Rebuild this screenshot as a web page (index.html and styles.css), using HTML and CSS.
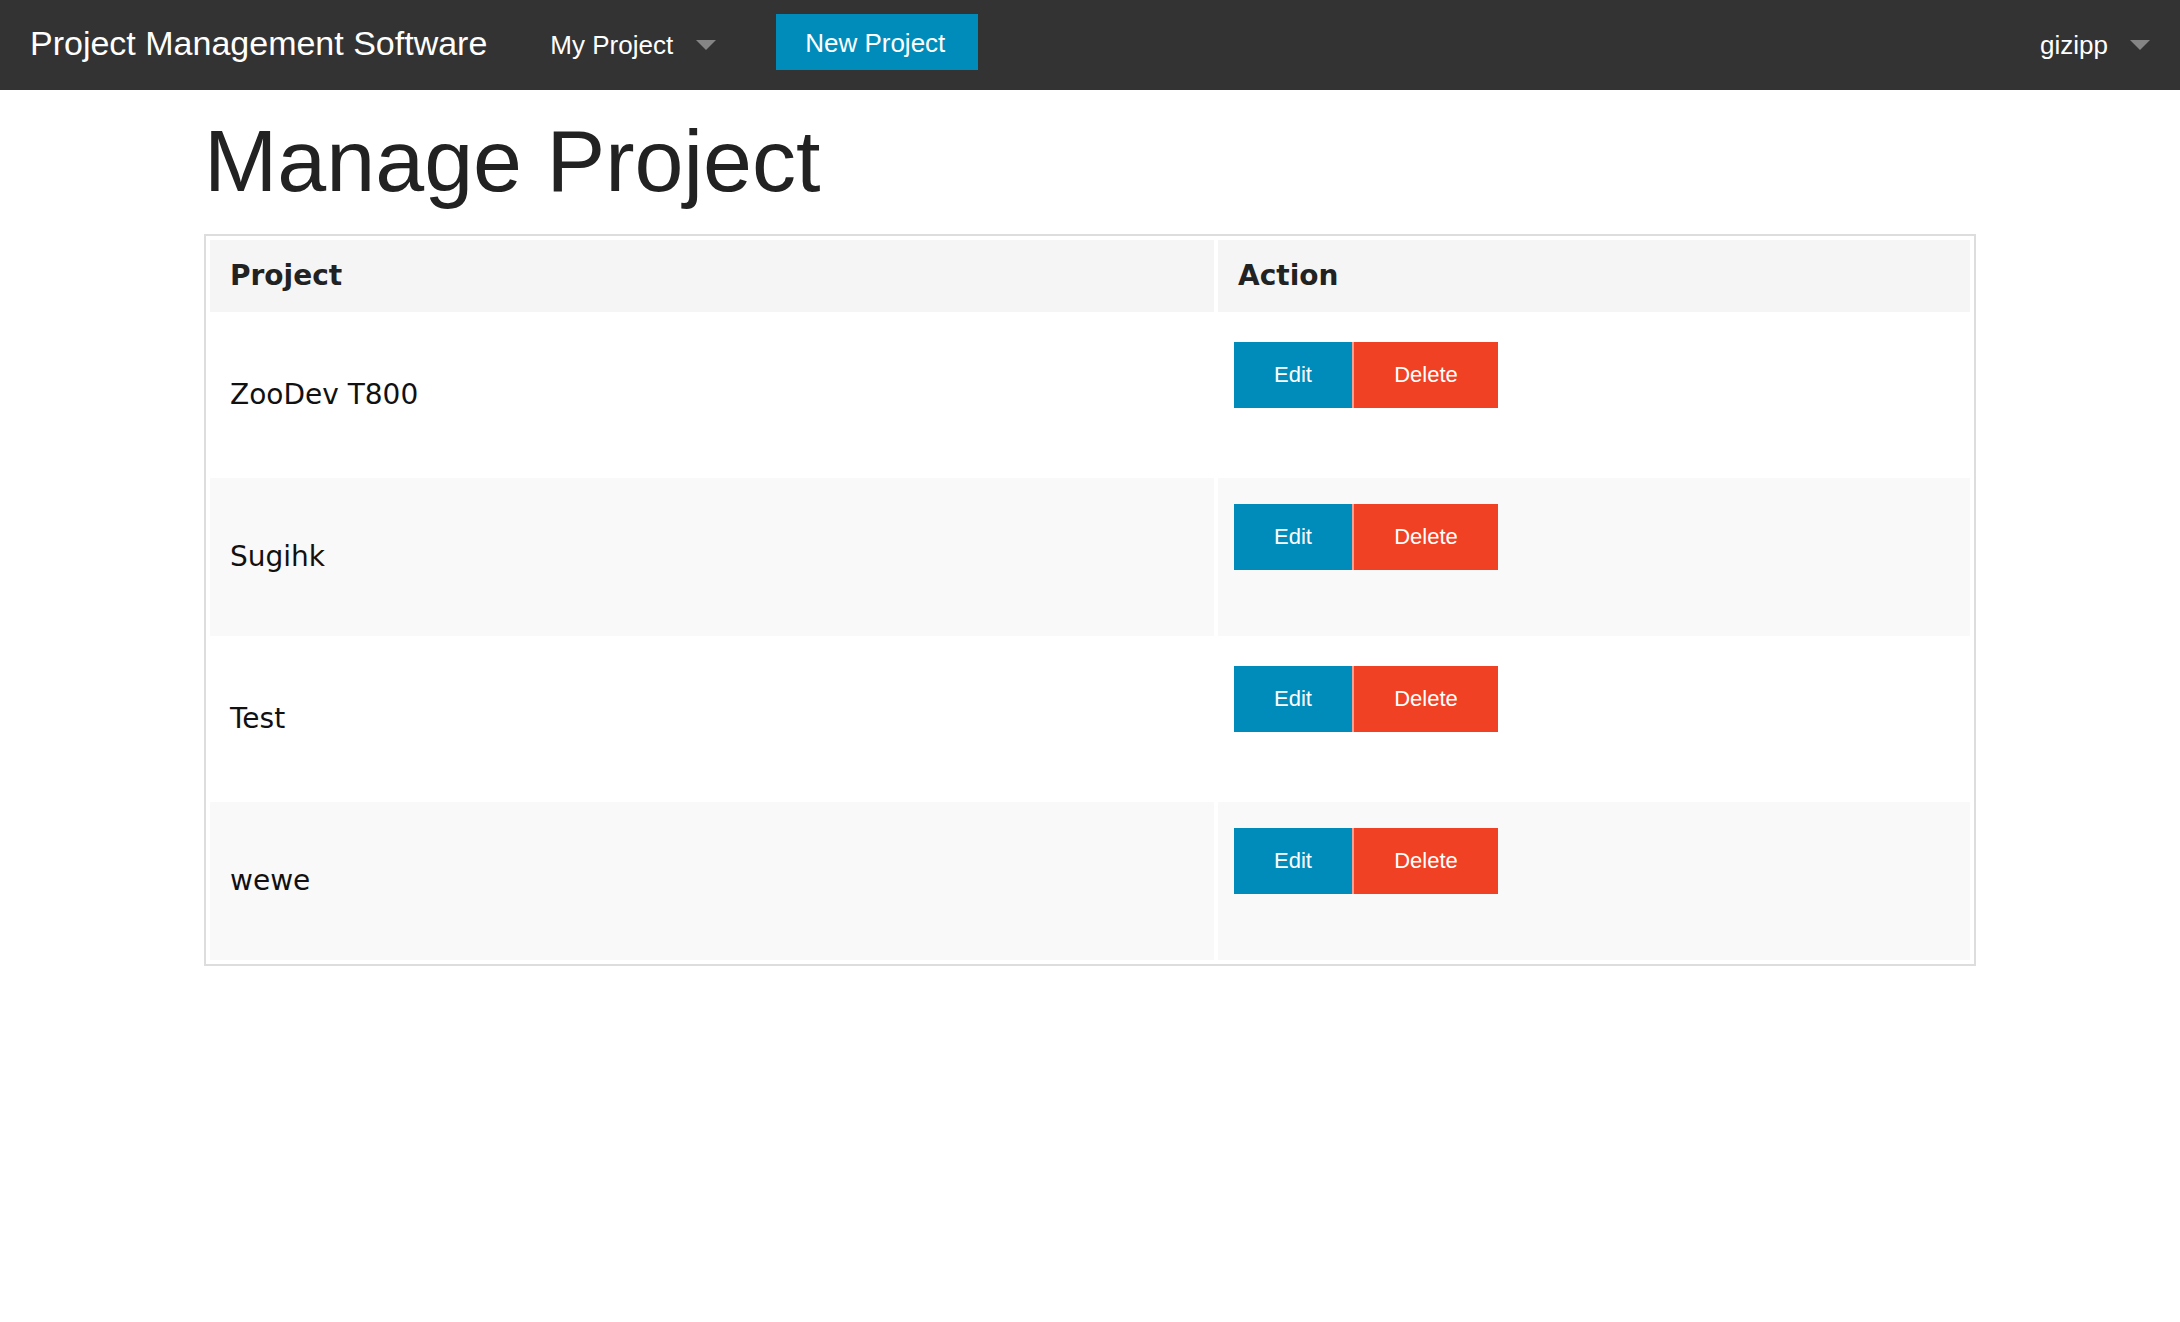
FILE: index.html
```html
<!DOCTYPE html>
<html lang="en">
<head>
<meta charset="utf-8">
<title>Manage Project</title>
<link rel="stylesheet" href="styles.css">
</head>
<body>
<nav class="topbar">
  <div class="brand">Project Management Software</div>
  <div class="nav-left">
    <a class="nav-link dropdown" href="#">My Project<span class="caret"></span></a>
    <a class="nav-button" href="#">New Project</a>
  </div>
  <div class="nav-right">
    <a class="nav-link dropdown user" href="#">gizipp<span class="caret"></span></a>
  </div>
</nav>

<main class="container">
  <h1 class="page-title">Manage Project</h1>
  <table class="projects">
    <colgroup>
      <col class="col-project">
      <col class="col-action">
    </colgroup>
    <thead>
      <tr>
        <th>Project</th>
        <th>Action</th>
      </tr>
    </thead>
    <tbody>
      <tr>
        <td class="name">ZooDev T800</td>
        <td class="actions"><div class="btn-group"><a class="btn edit" href="#">Edit</a><a class="btn delete" href="#">Delete</a></div></td>
      </tr>
      <tr>
        <td class="name">Sugihk</td>
        <td class="actions"><div class="btn-group"><a class="btn edit" href="#">Edit</a><a class="btn delete" href="#">Delete</a></div></td>
      </tr>
      <tr>
        <td class="name">Test</td>
        <td class="actions"><div class="btn-group"><a class="btn edit" href="#">Edit</a><a class="btn delete" href="#">Delete</a></div></td>
      </tr>
      <tr>
        <td class="name">wewe</td>
        <td class="actions"><div class="btn-group"><a class="btn edit" href="#">Edit</a><a class="btn delete" href="#">Delete</a></div></td>
      </tr>
    </tbody>
  </table>
</main>
</body>
</html>
```

FILE: styles.css
```css
* { box-sizing: border-box; }

html, body {
  margin: 0;
  padding: 0;
  background: #ffffff;
  color: #222222;
  font-family: "Liberation Sans", Arial, Helvetica, sans-serif;
}

a { text-decoration: none; }

/* Top bar */
.topbar {
  height: 90px;
  background: #333333;
  display: flex;
  align-items: flex-start;
}

.brand {
  padding: 0 33px 0 30px;
  font-size: 34px;
  line-height: 86px;
  color: #ffffff;
  white-space: nowrap;
}

.nav-left {
  display: flex;
  align-items: flex-start;
}

.nav-link {
  display: flex;
  align-items: flex-start;
  font-size: 26px;
  line-height: 91px;
  color: #ffffff;
  white-space: nowrap;
}

.nav-left .nav-link {
  padding: 0 60px 0 30px;
}

.caret {
  width: 0;
  height: 0;
  margin-top: 40px;
  margin-left: 23px;
  border-style: solid;
  border-width: 10px 10px 0 10px;
  border-color: #858585 transparent transparent transparent;
}

.nav-button {
  margin-top: 14px;
  width: 202px;
  height: 56px;
  padding: 2px 0 0 29px;
  background: #008cba;
  color: #ffffff;
  font-size: 26px;
  line-height: 54px;
  white-space: nowrap;
}

.nav-right {
  margin-left: auto;
  display: flex;
}

.nav-right .nav-link {
  padding-right: 30px;
  line-height: 90px;
}

.nav-right .caret {
  margin-left: 22px;
}

/* Content */
.container {
  width: 1772px;
  margin: 0 auto;
}

.page-title {
  margin: 9px 0 11px;
  font-size: 88px;
  font-weight: normal;
  line-height: 124px;
  color: #222222;
}

.projects {
  width: 1772px;
  table-layout: fixed;
  border-collapse: separate;
  border-spacing: 4px;
  border: 2px solid #dddddd;
  background: #ffffff;
  font-family: "DejaVu Sans", Verdana, sans-serif;
}

.col-project { width: 1004px; }
.col-action { width: 752px; }

.projects th {
  height: 72px;
  padding: 18px 20px;
  background: #f5f5f5;
  color: #222222;
  font-size: 28px;
  font-weight: bold;
  line-height: 36px;
  text-align: left;
}

.projects tbody tr {
  height: 158px;
}

.projects tbody tr:nth-child(even) td {
  background: #f9f9f9;
}

.projects td {
  padding: 18px 20px;
  color: #111111;
  font-size: 28px;
  line-height: 36px;
}

.projects td.name {
  vertical-align: middle;
}

.projects td.actions {
  vertical-align: top;
}

.btn-group {
  display: flex;
  margin: 8px 0 0 -4px;
}

.btn {
  display: block;
  height: 66px;
  font-family: "Liberation Sans", Arial, Helvetica, sans-serif;
  font-size: 22px;
  line-height: 66px;
  color: #ffffff;
  text-align: center;
}

.btn.edit {
  width: 118px;
  background: #008cba;
}

.btn.delete {
  width: 146px;
  background: #f04124;
  border-left: 2px solid rgba(255, 255, 255, 0.5);
}
```
